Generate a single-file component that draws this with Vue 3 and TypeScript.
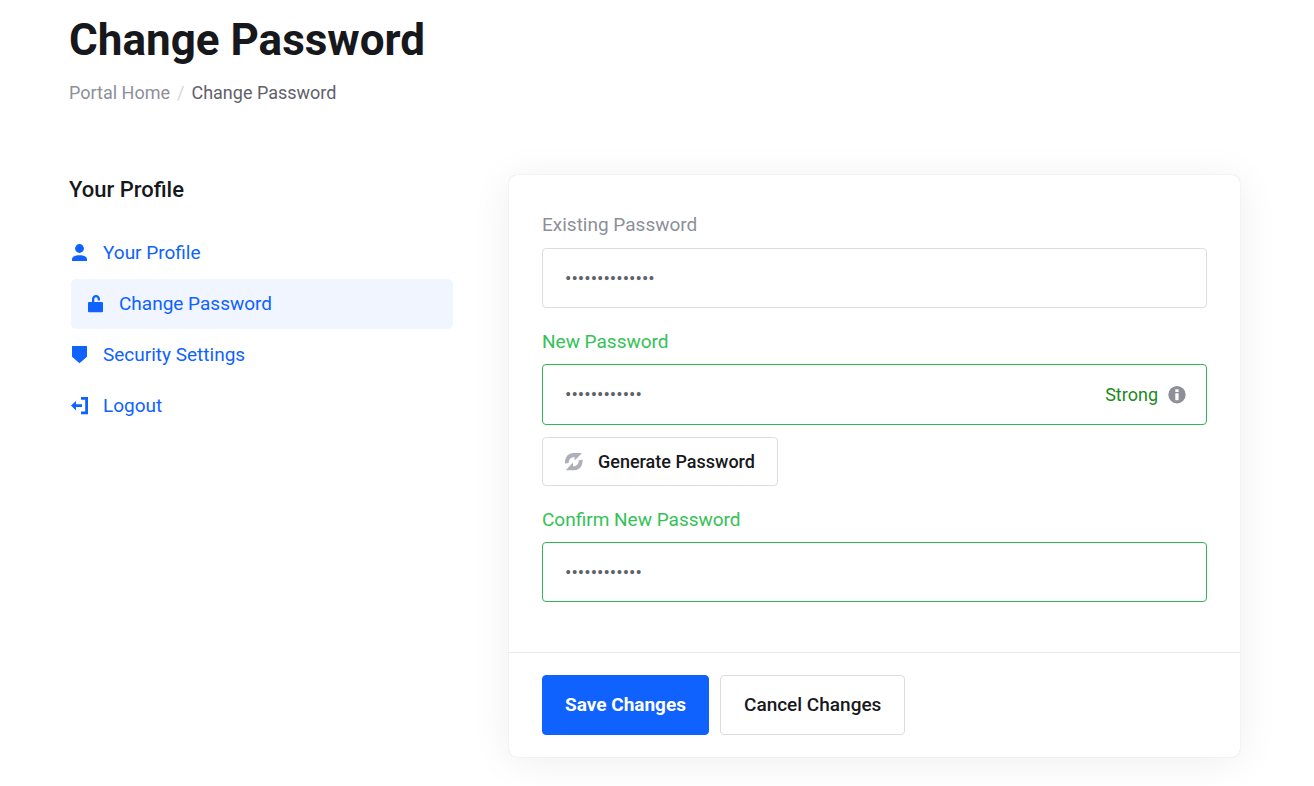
<script setup lang="ts">
import { ref } from 'vue'

interface NavItem {
  label: string
  icon: string
  active?: boolean
}

const items: NavItem[] = [
  { label: 'Your Profile', icon: 'user' },
  { label: 'Change Password', icon: 'unlock', active: true },
  { label: 'Security Settings', icon: 'shield' },
  { label: 'Logout', icon: 'logout' },
]

const existing = ref('existing-pass1')
const fresh = ref('new-password')
const confirmed = ref('new-password')
</script>

<template>
  <div class="page">
    <header>
      <h1>Change Password</h1>
      <nav class="crumbs" aria-label="Breadcrumb">
        <a href="#">Portal Home</a>
        <span class="sep">/</span>
        <span>Change Password</span>
      </nav>
    </header>

    <div class="columns">
      <aside>
        <h2>Your Profile</h2>
        <nav class="menu" aria-label="Profile">
          <a v-for="item in items" :key="item.label" href="#" :class="{ active: item.active }">
            <svg viewBox="0 0 18 18" width="18" height="18" aria-hidden="true">
              <template v-if="item.icon === 'user'">
                <circle cx="8.500" cy="4.500" r="4.400" />
                <path d="M1 17v-1.400c0-3 3.400-4.300 7.500-4.300s7.500 1.300 7.500 4.300V17z" />
              </template>
              <path
                v-else-if="item.icon === 'unlock'"
                d="M2 7h3V4.300C5 1.800 6.700 0 9 0s4 1.700 4 4.200V5.600h-2.300V4.300c0-1.200-.7-2-1.700-2s-1.700.8-1.700 2V7H15a1 1 0 0 1 1 1v8.200a1 1 0 0 1-1 1H2a1 1 0 0 1-1-1V8a1 1 0 0 1 1-1z"
              />
              <path v-else-if="item.icon === 'shield'" d="M1.500 0h14a.5.5 0 0 1 .5.5v10.200L8.500 17.200 1 10.700V.5a.5.5 0 0 1 .5-.5z" />
              <template v-else>
                <path d="M10 0h7v17.200h-7v-2.800h4.200V2.800H10z" />
                <path d="M0 8.600l5-4.700v3.400h6v2.700H5v3.400z" />
              </template>
            </svg>
            <span>{{ item.label }}</span>
          </a>
        </nav>
      </aside>

      <form class="card" @submit.prevent>
        <div class="body">
          <div class="field">
            <label for="existing">Existing Password</label>
            <input id="existing" v-model="existing" type="password" />
          </div>
          <div class="field valid">
            <label for="new">New Password</label>
            <div class="box">
              <input id="new" v-model="fresh" type="password" />
              <div class="strength">
                <span>Strong</span>
                <svg viewBox="0 0 18 18" width="18" height="18" aria-hidden="true">
                  <circle cx="9" cy="8.700" r="8.700" fill="#8d8f99" />
                  <path d="M7.300 3.200h3.300V6H7.300zM7.300 7.200h3.300v7H7.300z" fill="#fff" />
                </svg>
              </div>
            </div>
            <button type="button" class="generate">
              <svg viewBox="0 0 18 18" width="18" height="18" aria-hidden="true">
                <path d="M.1 10.800C-.4 4.200 3.300 0 8.500 0H17L9.600 7.600V3.900C5.800 4 3.600 6.500 3.900 9.800z" />
                <path d="M17.500 6.400C18 13 14.300 17.200 9.100 17.200H.8L8 9.600v3.700c3.800-.1 6-2.600 5.700-5.900z" />
              </svg>
              Generate Password
            </button>
          </div>
          <div class="field valid">
            <label for="confirm">Confirm New Password</label>
            <input id="confirm" v-model="confirmed" type="password" />
          </div>
        </div>
        <footer>
          <button type="submit" class="save">Save Changes</button>
          <button type="reset" class="cancel" @click.prevent>Cancel Changes</button>
        </footer>
      </form>
    </div>
  </div>
</template>

<style>
body {
  margin: 0;
  background: #fff;
}
</style>

<style scoped>
.page {
  padding: 12px 74px 28px 69px;
  font-family: Roboto, 'Liberation Sans', sans-serif;
  font-size: 19px;
  line-height: 28px;
  color: #17181c;
}
.page * {
  box-sizing: border-box;
}
h1 {
  margin: 0;
  font-size: 44px;
  line-height: 56px;
  font-weight: 700;
}
a {
  color: #0f62fe;
  text-decoration: none;
}
.crumbs {
  display: flex;
  gap: 7px;
  margin-top: 11px;
  font-size: 18px;
  color: #5f616b;
}
.crumbs a {
  color: #8d8f99;
}
.sep {
  color: #d5d6db;
}
.columns {
  display: grid;
  grid-template-columns: 384px minmax(0, 1fr);
  gap: 56px;
  align-items: start;
  margin-top: 68px;
}
h2 {
  margin: 0;
  font-size: 22px;
  line-height: 30px;
  font-weight: 500;
}
.menu {
  display: flex;
  flex-direction: column;
  margin: 23px 0 0 2px;
}
.menu a {
  display: flex;
  align-items: center;
  gap: 14px;
  padding: 11px 0;
  border-radius: 5px;
}
.menu a + a {
  margin-top: 1px;
}
.menu a.active {
  padding: 11px 16px;
  background: #f0f5ff;
}
.menu svg {
  fill: #0f62fe;
}
.card {
  border-radius: 8px;
  background: #fff;
  box-shadow: 0 0 1px rgba(0, 0, 0, 0.2), 0 4px 40px rgba(0, 0, 0, 0.07);
}
.body {
  display: flex;
  flex-direction: column;
  gap: 20px;
  padding: 36px 33px 50px;
}
.field {
  display: flex;
  flex-direction: column;
}
label {
  margin-bottom: 9px;
  color: #8d8f99;
}
.valid label {
  margin-bottom: 8px;
  color: #34c257;
}
input {
  width: 100%;
  height: 60px;
  padding: 0 22px;
  border: 1px solid #dcdde1;
  border-radius: 4px;
  outline: none;
  background: #fff;
  font: inherit;
  color: #5f616b;
}
.valid input {
  border-color: #34b555;
}
.box {
  position: relative;
}
.box input {
  display: block;
  height: 61px;
}
.strength {
  position: absolute;
  top: 0;
  bottom: 0;
  right: 21px;
  display: flex;
  align-items: center;
  gap: 10px;
  font-size: 18px;
  color: #1c8a1c;
}
button {
  height: 60px;
  padding: 0 22px;
  border: 1px solid #dcdde1;
  border-radius: 4px;
  background: #fff;
  font: inherit;
  font-weight: 500;
  color: #17181c;
}
.generate {
  display: flex;
  align-items: center;
  align-self: flex-start;
  gap: 15px;
  height: 49px;
  margin-top: 12px;
  font-size: 18px;
}
.generate svg {
  fill: #adafb9;
}
footer {
  display: flex;
  gap: 11px;
  padding: 22px 33px;
  border-top: 1px solid #e8e9ec;
}
.save {
  border-color: #0f62fe;
  background: #0f62fe;
  font-weight: 700;
  color: #fff;
}
.cancel {
  padding: 0 23px;
}
</style>
